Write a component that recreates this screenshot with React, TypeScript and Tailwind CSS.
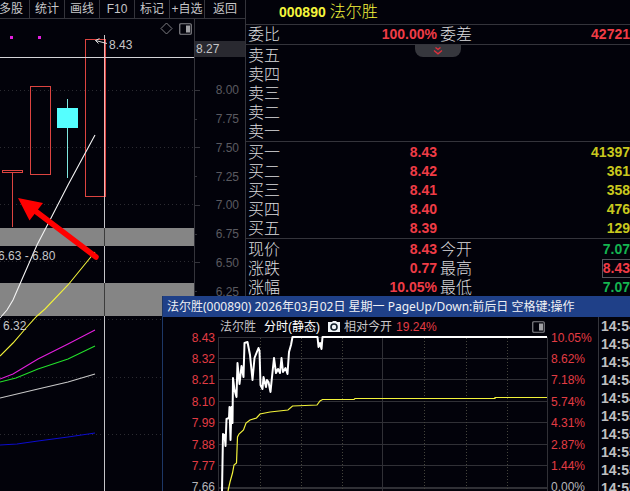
import type { ReactNode } from 'react';

const toolbar = ['统计', '画线', 'F10', '标记', '+自选', '返回'];
const priceAxis = ['8.00', '7.75', '7.50', '7.25', '7.00', '6.75', '6.50', '6.25'];
const gridLines = [90, 147, 204, 261, 319, 377, 434];

const asks = ['卖五', '卖四', '卖三', '卖二', '卖一'];
const bids = [
  { label: '买一', price: '8.43', volume: '41397' },
  { label: '买二', price: '8.42', volume: '361' },
  { label: '买三', price: '8.41', volume: '358' },
  { label: '买四', price: '8.40', volume: '476' },
  { label: '买五', price: '8.39', volume: '129' },
];

const minutePrices = ['8.43', '8.32', '8.21', '8.10', '7.99', '7.88', '7.77', '7.66'];
const minutePercents = ['10.05%', '8.62%', '7.18%', '5.74%', '4.31%', '2.87%', '1.44%', '0.00%'];
const minuteRows = [358.5, 379.5, 401.5, 422.5, 444.5, 465.5];
const times = ['14:54', '14:54', '14:54', '14:54', '14:54', '14:55', '14:55', '14:55', '14:55', '14:55'];

function PanelIcon() {
  return (
    <svg width="13" height="12" viewBox="0 0 13 12" aria-hidden="true">
      <rect x="0.75" y="0.75" width="11.5" height="10.5" rx="1" fill="none" stroke="#85858a" strokeWidth="1.2" />
      <rect x="7" y="2.5" width="4" height="7" fill="#a0a0a4" />
    </svg>
  );
}

function Toolbar() {
  return (
    <nav className="flex h-[19px] shrink-0 border-b border-[#34343b] text-[12px] leading-[18px] text-[#c6c6c8]">
      <button className="flex w-[30px] justify-end border-r border-[#34343b] pr-[6px] whitespace-nowrap">多股</button>
      {toolbar.map(item => (
        <button
          key={item}
          className="flex w-[35px] justify-center border-r border-[#34343b] whitespace-nowrap last:flex-1 last:border-r-0"
        >
          {item}
        </button>
      ))}
    </nav>
  );
}

function DailyChart() {
  return (
    <svg className="block w-[194px] shrink-0" height="472" viewBox="0 19 194 472" aria-label="K线图">
      <g stroke="#2b2b31" strokeDasharray="1 3">
        {gridLines.map(y => (
          <line key={y} x1="0" x2="194" y1={y + 0.5} y2={y + 0.5} />
        ))}
      </g>
      <rect x="0" y="228" width="194" height="18" fill="#858585" />
      <rect x="0" y="283" width="194" height="33" fill="#858585" />

      <rect x="10" y="36" width="3" height="3" fill="#e31fdd" />
      <rect x="38" y="36" width="3" height="3" fill="#e31fdd" />

      {/* candles */}
      <g fill="none" stroke="#dc4440">
        <rect x="2.5" y="170.5" width="20" height="2" />
        <line x1="12.5" x2="12.5" y1="173" y2="227" />
        <rect x="30.5" y="86.5" width="20" height="88" />
        <rect x="85.5" y="39.5" width="20" height="157" />
      </g>
      <line x1="67.5" x2="67.5" y1="99" y2="178" stroke="#7fe8e0" />
      <rect x="57" y="108" width="21" height="20" fill="#55ffff" />

      {/* crosshair */}
      <line x1="0" x2="194" y1="57.5" y2="57.5" stroke="#d4d4d8" />
      <g shapeRendering="crispEdges">
        <line x1="104.5" x2="104.5" y1="35" y2="491" stroke="#c4c4c8" />
        <line x1="104.5" x2="104.5" y1="39" y2="197" stroke="#f2b4b4" />
        <line x1="104.5" x2="104.5" y1="228" y2="246" stroke="#3c3c3c" />
        <line x1="104.5" x2="104.5" y1="283" y2="316" stroke="#3c3c3c" />
      </g>

      {/* moving averages */}
      <g fill="none" strokeWidth="1.1">
        <polyline points="0,318 7,310 13,300 23,277 37,245 50,220 68,185 95,135" stroke="#f4f4f4" />
        <polyline points="0,356 13,343 26,328 37,316 45,309 68,285 90,258 95,252" stroke="#f2f23a" />
        <polyline points="0,379 13,374 38,359 68,344 95,330" stroke="#e31fdd" />
        <polyline points="0,382 16,378 38,369 68,359 95,346" stroke="#23e02b" />
        <polyline points="0,398 38,389 68,382 95,374" stroke="#c8c8c8" />
        <polyline points="0,445 17,444 38,441 68,437 95,433" stroke="#0c0ccc" />
      </g>

      <path d="M107 43.5 L95.5 40.5 M99.5 38.5 L95.5 40.5 L98.5 43.5" fill="none" stroke="#dcdcdc" />
      <g fill="#c6c6c8" fontSize="12">
        <text x="109" y="49">8.43</text>
        <text x="-2" y="260">6.63 - 6.80</text>
        <text x="3" y="330">6.32</text>
      </g>

      <line x1="34" x2="96" y1="210" y2="257" stroke="#ff0000" strokeWidth="5.5" strokeLinecap="round" />
      <polygon points="18,198 43,203 29.5,220.5" fill="#ff0000" />

      <path d="M166.5 23 L172 28.5 L166.5 34 L161 28.5 Z" fill="none" stroke="#7d7d82" />
      <g transform="translate(179 23)">
        <PanelIcon />
      </g>
    </svg>
  );
}

function PriceAxis() {
  return (
    <div className="flex-1 border-l border-[#34343b] text-[12px]">
      <div className="mt-[22px] h-4 bg-[#292930] pl-px leading-4 text-[#c6c6c8]">8.27</div>
      <ul className="mt-[19px] grid h-[230px] grid-rows-8 text-[#5a5a60]">
        {priceAxis.map((price, i) => (
          <li key={price} className="flex items-center justify-between pr-[6px]">
            <span className={i % 2 ? 'h-px w-[2px] bg-[#34343b]' : 'h-px w-[5px] bg-[#34343b]'} />
            {price}
          </li>
        ))}
      </ul>
    </div>
  );
}

function QuoteTable({ children }: { children: ReactNode }) {
  return (
    <table className="w-full table-fixed">
      <colgroup>
        <col className="w-9" />
        <col />
        <col className="w-9" />
        <col />
      </colgroup>
      <tbody>{children}</tbody>
    </table>
  );
}

type RowProps = {
  label: string;
  value?: string;
  label2?: string;
  value2?: string;
  color2?: string;
  boxed?: boolean;
};

function QuoteRow({ label, value, label2, value2, color2 = 'text-[#f03c46]', boxed }: RowProps) {
  return (
    <tr className="h-[19px] leading-[19px]">
      <th className="p-0 pl-[2px] text-left text-[16px] font-light whitespace-nowrap">{label}</th>
      <td className="p-0 pr-px text-right text-[14px] font-bold text-[#f03c46]">{value}</td>
      <th className="p-0 pl-[2px] text-left text-[16px] font-light whitespace-nowrap">{label2}</th>
      <td className={`p-0 text-right text-[14px] font-bold ${color2}`}>
        {boxed ? (
          <span className="inline-block border border-r-0 border-[#55555c] align-top leading-[17px]">{value2}</span>
        ) : (
          value2
        )}
      </td>
    </tr>
  );
}

function QuotePanel() {
  return (
    <section className="min-w-0 flex-1 text-[#dcdcde]">
      <h1 className="flex h-[25px] items-center gap-1 border-b border-[#34343b] pl-[33px] text-[#f5f53c]">
        <span className="text-[14px] font-bold">000890</span>
        <span className="text-[16px] font-light">法尔胜</span>
      </h1>
      <div className="border-b border-[#34343b]">
        <QuoteTable>
          <QuoteRow label="委比" value="100.00%" label2="委差" value2="42721" />
        </QuoteTable>
      </div>
      <div className="relative border-b border-[#34343b] pt-px">
        <QuoteTable>
          {asks.map(label => (
            <QuoteRow key={label} label={label} />
          ))}
        </QuoteTable>
        <button
          aria-label="展开"
          className="absolute top-0 left-1/2 flex h-3 w-[46px] -translate-x-1/2 items-center justify-center rounded-b-lg bg-[#36373d]"
        >
          <svg width="10" height="8" viewBox="0 0 10 8" fill="none" stroke="#e0303c" strokeWidth="1.3">
            <path d="M2.5 0.5 L5 2.5 L7.5 0.5 M1 3.5 L5 6.8 L9 3.5" />
          </svg>
        </button>
      </div>
      <div className="border-b border-[#34343b] pt-px">
        <QuoteTable>
          {bids.map(bid => (
            <QuoteRow key={bid.label} label={bid.label} value={bid.price} value2={bid.volume} color2="text-[#c8c81e]" />
          ))}
        </QuoteTable>
      </div>
      <div className="pt-px">
        <QuoteTable>
          <QuoteRow label="现价" value="8.43" label2="今开" value2="7.07" color2="text-[#14b450]" />
          <QuoteRow label="涨跌" value="0.77" label2="最高" value2="8.43" boxed />
          <QuoteRow label="涨幅" value="10.05%" label2="最低" value2="7.07" color2="text-[#14b450]" />
        </QuoteTable>
      </div>
    </section>
  );
}

function MinuteChart() {
  return (
    <svg className="block w-full" viewBox="218 336 330 155" aria-label="分时图">
      <g stroke="#303036" shapeRendering="crispEdges">
        <line x1="218" x2="548" y1="337.5" y2="337.5" />
        {minuteRows.map(y => (
          <line key={y} x1="218" x2="548" y1={y} y2={y} />
        ))}
        <line x1="218" x2="548" y1="488" y2="488" strokeWidth="2" />
        <line x1="218.5" x2="218.5" y1="337" y2="491" />
        <line x1="382.5" x2="382.5" y1="337" y2="491" />
        <line x1="547.5" x2="547.5" y1="337" y2="491" />
      </g>
      <g stroke="#44443c" strokeDasharray="1 2">
        {[260.5, 301.5, 342.5, 424.5, 466.5, 507.5].map(x => (
          <line key={x} x1={x} x2={x} y1="338" y2="491" />
        ))}
      </g>
      <polyline
        fill="none"
        stroke="#f2f23a"
        strokeWidth="1.2"
        points="228,491 230,482 232.5,473 234,465 236.5,463 237.5,437 239,434 243.5,430 246,423 250,420 256.5,418 260,414 270,412 288,410 292.5,406 317,405 320,401 322.5,399.5 354,399.5 355,398.5 495,398.5 495,397.5 547,397.5"
      />
      <polyline
        fill="none"
        stroke="#ffffff"
        strokeWidth="2"
        strokeLinejoin="round"
        points="222,491 223,434 224.5,435 225.5,446 226.5,419 229,418 229.5,407 230.5,440 231.5,407 232.5,423 233,378 234.5,390 236.5,397 237.5,363 239.5,384 241.5,366 243.5,377 244.5,343 247.5,342 250,355 252.5,380 254.5,358 258.5,348 259.5,351 260.5,385 262.5,389 263.5,377 266,387 267,380 268.5,382 270.5,392 272,377 274,358 276,373 278,369 280,373 281.5,358 283,372 285.5,368 287.5,374 289,352 291,345 292.5,337 317.5,337 318.5,347 320,343 321.5,349 322.5,337 547,337"
      />
    </svg>
  );
}

function MinuteWindow() {
  return (
    <section className="absolute top-[296px] right-0 bottom-0 left-[162px] flex flex-col overflow-hidden border-l border-[#1d3766] bg-[#02020a]">
      <h2 className="h-[21px] shrink-0 bg-[#1f4088] pl-1 font-['Noto_Sans','Noto_Sans_CJK_SC',sans-serif] text-[12px] leading-[21px] whitespace-nowrap text-[#f0f0f4]">
        法尔胜(000890) 2026年03月02日 星期一 PageUp/Down:前后日 空格键:操作
      </h2>
      <div className="flex min-h-0 flex-1 text-[12px]">
        <ul className="mt-[10px] grid h-[171px] w-[55px] shrink-0 grid-rows-8 pr-[3px] text-right text-[#e23c44]">
          {minutePrices.map(price => (
            <li key={price} className="flex items-center justify-end last:text-[#b4b4b8]">
              {price}
            </li>
          ))}
        </ul>
        <div className="min-w-0 flex-1">
          <div className="flex h-[19px] items-center gap-2 pr-[3px] pl-[2px] whitespace-nowrap text-[#c6c6c8]">
            <span>法尔胜</span>
            <span className="text-white">分时(静态)</span>
            <span className="flex items-center gap-1">
              <svg width="12" height="12" viewBox="0 0 12 12" aria-hidden="true">
                <path d="M0 1 H4 L5 0 H8 L9 1 H12 V11 H0 Z" fill="#f0f4f8" />
                <circle cx="6" cy="6" r="3" fill="#f0f4f8" stroke="#14202c" strokeWidth="1.6" />
              </svg>
              相对今开
              <span className="text-[#e23c44]">19.24%</span>
            </span>
            <button aria-label="侧栏" className="ml-auto">
              <PanelIcon />
            </button>
          </div>
          <MinuteChart />
        </div>
        <ul className="mt-[10px] grid h-[171px] w-[50px] shrink-0 grid-rows-8 pl-[3px] text-[#e23c44]">
          {minutePercents.map(percent => (
            <li key={percent} className="flex items-center last:text-[#b4b4b8]">
              {percent}
            </li>
          ))}
        </ul>
        <ul className="w-8 shrink-0 overflow-hidden border-l border-[#34343b] pl-[2px] text-[14px] leading-[18px] font-bold text-[#c0c0c2]">
          {times.map((time, i) => (
            <li key={i}>{time}</li>
          ))}
        </ul>
      </div>
    </section>
  );
}

export default function App() {
  return (
    <main className="relative flex h-screen overflow-hidden bg-[#02020a] font-['Liberation_Sans','Noto_Sans_CJK_SC',sans-serif]">
      <section className="flex w-[246px] shrink-0 flex-col border-r border-[#34343b]">
        <Toolbar />
        <div className="flex flex-1">
          <DailyChart />
          <PriceAxis />
        </div>
      </section>
      <QuotePanel />
      <MinuteWindow />
    </main>
  );
}
